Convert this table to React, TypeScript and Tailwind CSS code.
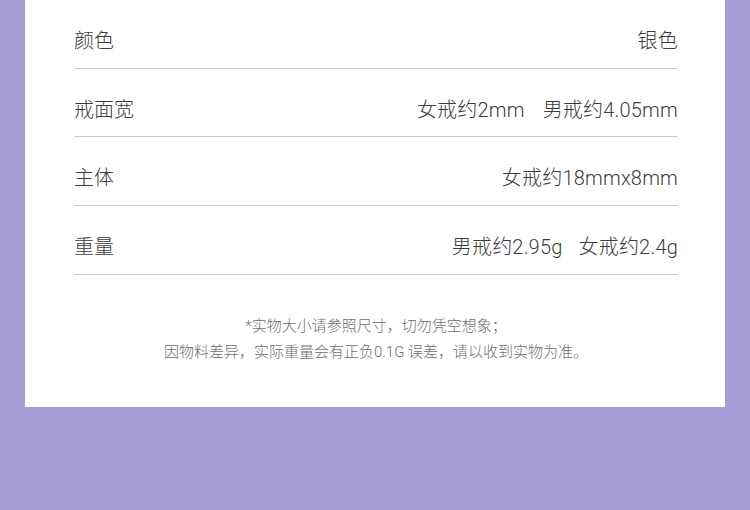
const rows: { label: string; value: React.ReactNode }[] = [
  { label: '颜色', value: '银色' },
  {
    label: '戒面宽',
    value: (
      <>
        <span>女戒约2mm</span>
        <span className="ml-[18px]">男戒约4.05mm</span>
      </>
    ),
  },
  { label: '主体', value: '女戒约18mmx8mm' },
  {
    label: '重量',
    value: (
      <>
        <span>男戒约2.95g</span>
        <span className="ml-[16px]">女戒约2.4g</span>
      </>
    ),
  },
];

export default function App() {
  return (
    <div
      className="w-[750px] h-[510px] bg-[#a59cd8] overflow-hidden"
      style={{ fontFamily: 'Roboto, "Noto Sans CJK SC", sans-serif' }}
    >
      <div className="ml-[25px] w-[700px] bg-white pl-[49px] pr-[47px] pb-[42px]">
        {rows.map((row) => (
          <div
            key={row.label}
            className="flex items-center justify-between pt-[27px] pb-[12.7px] border-b border-[#cacaca] text-[20px] leading-[28px] font-light text-[#3c3c3c]"
          >
            <span>{row.label}</span>
            <span className="flex tracking-[0.2px]">{row.value}</span>
          </div>
        ))}

        <div className="mt-[38px] text-center text-[15px] leading-[26px] font-light text-[#6e6e6e]">
          <p>*实物大小请参照尺寸，切勿凭空想象；</p>
          <p>因物料差异，实际重量会有正负0.1G 误差，请以收到实物为准。</p>
        </div>
      </div>
    </div>
  );
}
